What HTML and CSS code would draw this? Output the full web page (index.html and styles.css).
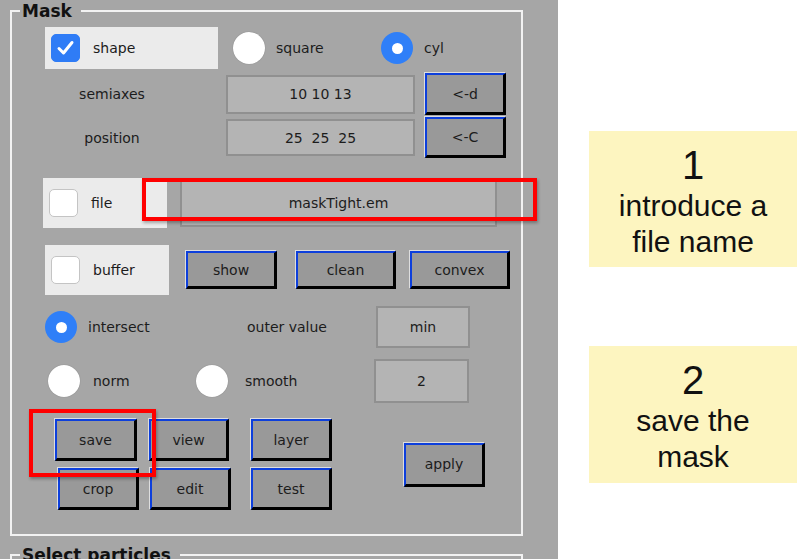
FILE: index.html
```html
<!DOCTYPE html>
<html>
<head>
<meta charset="utf-8">
<link rel="stylesheet" href="styles.css">
</head>
<body>
<div class="page">
  <div class="panel">
    <fieldset class="group mask">
      <legend>Mask</legend>

      <div class="row r1">
        <div class="chkbox box-shape">
          <span class="check on"><svg width="29" height="28" viewBox="0 0 29 28"><path d="M8 14.5 L12.5 19 L21 8.5" fill="none" stroke="#fff" stroke-width="3" stroke-linecap="round" stroke-linejoin="round"/></svg></span>
          <span class="lbl">shape</span>
        </div>
        <div class="opt opt-square"><span class="radio"></span><span class="lbl">square</span></div>
        <div class="opt opt-cyl"><span class="radio on"></span><span class="lbl">cyl</span></div>
      </div>

      <div class="row r2">
        <span class="fieldlbl">semiaxes</span>
        <div class="field f-vec">10 10 13</div>
        <button class="btn b-arrow">&lt;-d</button>
      </div>

      <div class="row r3">
        <span class="fieldlbl">position</span>
        <div class="field f-vec f-pos">25&nbsp;&nbsp;25&nbsp;&nbsp;25</div>
        <button class="btn b-arrow b-arrow2">&lt;-C</button>
      </div>

      <div class="row r4">
        <div class="chkbox box-file">
          <span class="check"></span>
          <span class="lbl">file</span>
        </div>
        <div class="field f-file">maskTight.em</div>
      </div>

      <div class="row r5">
        <div class="chkbox box-buffer">
          <span class="check"></span>
          <span class="lbl">buffer</span>
        </div>
        <button class="btn b-show">show</button>
        <button class="btn b-clean">clean</button>
        <button class="btn b-convex">convex</button>
      </div>

      <div class="row r6">
        <div class="opt opt-intersect"><span class="radio on"></span><span class="lbl">intersect</span></div>
        <span class="plainlbl lbl-outer">outer value</span>
        <div class="field f-min">min</div>
      </div>

      <div class="row r7">
        <div class="opt opt-norm"><span class="radio"></span><span class="lbl">norm</span></div>
        <div class="opt opt-smooth"><span class="radio"></span><span class="lbl">smooth</span></div>
        <div class="field f-two">2</div>
      </div>

      <div class="row r8">
        <div class="btngrid">
          <div class="btnrow ba">
            <button class="btn b-save">save</button>
            <button class="btn b-view">view</button>
            <button class="btn b-layer">layer</button>
          </div>
          <div class="btnrow bb">
            <button class="btn b-crop">crop</button>
            <button class="btn b-edit">edit</button>
            <button class="btn b-test">test</button>
          </div>
        </div>
        <button class="btn b-apply">apply</button>
      </div>
    </fieldset>

    <fieldset class="group particles">
      <legend>Select particles</legend>
    </fieldset>
  </div>

  <div class="notes">
    <div class="note note1">
      <div class="num">1</div>
      <div class="txt">introduce a</div>
      <div class="txt">file name</div>
    </div>
    <div class="note note2">
      <div class="num">2</div>
      <div class="txt">save the</div>
      <div class="txt">mask</div>
    </div>
  </div>

  <div class="hl hl-file"></div>
  <div class="hl hl-save"></div>
</div>
</body>
</html>
```

FILE: styles.css
```css
* { box-sizing: border-box; }

html, body {
  margin: 0;
  padding: 0;
  background: #ffffff;
  overflow: hidden;
}

.page {
  position: relative;
  width: 800px;
  height: 559px;
  display: flex;
  font-family: "DejaVu Sans", sans-serif;
  font-size: 14px;
  color: #1c1c1c;
}

.panel {
  width: 558px;
  height: 559px;
  background: #a6a6a6;
  padding: 0 0 0 10px;
  overflow: hidden;
}

.group {
  margin: 0;
  padding: 0;
  width: 513px;
  border: 2px solid #f2f2f2;
  min-inline-size: 0;
}

.group legend {
  font-family: "DejaVu Sans", sans-serif;
  font-weight: bold;
  font-size: 17px;
  line-height: 20px;
  color: #111;
  padding: 0 9px 0 2px;
  margin-left: 8px;
}

.mask {
  margin-top: 1px;
  height: 535px;
}

.particles {
  margin-top: 9px;
  height: 100px;
}

.row {
  display: flex;
  align-items: center;
}

.r1 { margin-top: 6px; height: 42px; }
.r2 { margin-top: 4px; height: 42px; }
.r3 { margin-top: 2px; height: 41px; }
.r4 { margin-top: 20px; height: 50px; }
.r5 { margin-top: 17px; height: 50px; }
.r6 { margin-top: 11px; height: 42px; }
.r7 { margin-top: 11px; height: 44px; }
.r8 { margin-top: 16px; }

/* checkbox boxes */
.chkbox {
  display: flex;
  align-items: center;
  background: #ebebeb;
  height: 100%;
  padding-left: 6px;
}
.box-shape { margin-left: 33px; width: 173px; height: 42px; }
.box-file { margin-left: 31px; width: 124px; }
.box-buffer { margin-left: 33px; width: 124px; }

.check {
  width: 29px;
  height: 28px;
  border-radius: 5px;
  background: #ffffff;
  border: 1px solid #c4c4c4;
  flex: none;
  display: block;
}
.check.on {
  background: #2f7cf6;
  border-color: #2f7cf6;
}
.check svg { display: block; margin: -1px; }

.chkbox .lbl { margin-left: 13px; }

/* radio options */
.opt {
  display: flex;
  align-items: center;
  height: 100%;
}
.radio {
  width: 32px;
  height: 32px;
  border-radius: 50%;
  background: #ffffff;
  box-shadow: 0 0 1px rgba(0,0,0,0.35);
  flex: none;
  display: flex;
  align-items: center;
  justify-content: center;
}
.radio.on {
  background: #2f7ff8;
  box-shadow: none;
}
.radio.on::after {
  content: "";
  width: 11px;
  height: 11px;
  border-radius: 50%;
  background: #ffffff;
}

.opt-square { margin-left: 15px; width: 148px; }
.opt-square .lbl { margin-left: 11px; }
.opt-cyl .lbl { margin-left: 11px; }

.opt-intersect { margin-left: 33px; width: 202px; }
.opt-intersect .lbl { margin-left: 11px; }
.lbl-outer { width: 129px; }

.opt-norm { margin-left: 36px; width: 148px; }
.opt-norm .lbl { margin-left: 13px; }
.opt-smooth { width: 178px; }
.opt-smooth .lbl { margin-left: 17px; }

/* labels */
.fieldlbl {
  width: 214px;
  padding-right: 14px;
  text-align: center;
}

/* fields */
.field {
  background: #b4b4b4;
  border: 2px solid #909090;
  display: flex;
  align-items: center;
  justify-content: center;
}
.f-vec { width: 189px; height: 39px; }
.f-pos { height: 37px; }
.f-file { margin-left: 13px; width: 317px; height: 47px; }
.f-min { width: 94px; height: 42px; }
.f-two { width: 95px; height: 44px; }

/* buttons */
.btn {
  font-family: "DejaVu Sans", sans-serif;
  font-size: 14px;
  color: #1c1c1c;
  background: #999999;
  border-style: solid;
  border-width: 2px 3px 3px 2px;
  border-color: #0d3fdc #000000 #000000 #0d3fdc;
  box-shadow: -1px -1px 0 #dedede;
  padding: 0;
  margin: 0;
  display: flex;
  align-items: center;
  justify-content: center;
}

.b-arrow { margin-left: 10px; width: 81px; height: 42px; }
.b-arrow2 { height: 41px; }

.b-show { margin-left: 17px; width: 91px; height: 38px; }
.b-clean { margin-left: 19px; width: 100px; height: 38px; }
.b-convex { margin-left: 14px; width: 100px; height: 38px; }

.btngrid {
  display: flex;
  flex-direction: column;
  gap: 7px;
}
.btnrow { display: flex; }
.btnrow .btn { height: 42px; }

.b-save { margin-left: 43px; width: 82px; }
.b-view { margin-left: 12px; width: 80px; }
.b-layer { margin-left: 22px; width: 81px; }
.b-crop { margin-left: 46px; width: 81px; }
.b-edit { margin-left: 11px; width: 81px; }
.b-test { margin-left: 20px; width: 81px; }

.b-apply { margin-left: 72px; width: 81px; height: 44px; }

/* notes */
.notes {
  width: 242px;
  display: flex;
  flex-direction: column;
  font-family: "Liberation Sans", Arial, sans-serif;
  color: #111;
}
.note {
  margin-left: 31px;
  width: 208px;
  background: #fdf5c0;
  text-align: center;
  padding-top: 12px;
}
.note1 { margin-top: 131px; height: 136px; }
.note2 { margin-top: 79px; height: 137px; }

.num {
  font-size: 40px;
  line-height: 45px;
}
.txt {
  font-size: 30px;
  line-height: 36px;
}

/* red highlight annotations */
.hl {
  position: absolute;
  border: 4px solid #ff0000;
  box-shadow: 1px 2px 3px rgba(0,0,0,0.3);
}
.hl-file { left: 142px; top: 178px; width: 395px; height: 43px; }
.hl-save { left: 29px; top: 409px; width: 127px; height: 68px; }
```
